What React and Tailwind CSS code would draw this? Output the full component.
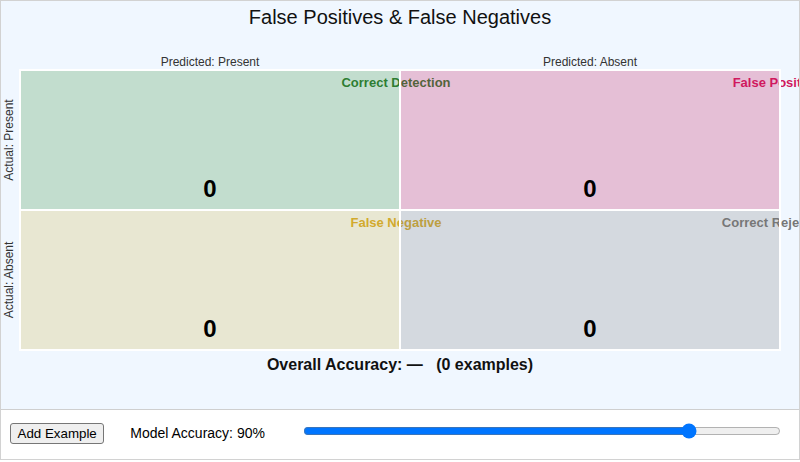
import React from "react";

const cells = [
  { label: "Correct Detection", color: "text-[#2e7d32]", bg: "bg-[#388e3c40]", value: 0 },
  { label: "False Positive", color: "text-[#d0195e]", bg: "bg-[#c2185b40]", value: 0 },
  { label: "False Negative", color: "text-[#d2aa2d]", bg: "bg-[#d0b74b40]", value: 0 },
  { label: "Correct Rejection", color: "text-[#777777]", bg: "bg-[#80808040]", value: 0 },
];

function Cell({ c }) {
  return (
    <div className={`relative flex flex-col h-[140px] w-[380px] ${c.bg} outline-2 outline-white -outline-offset-1`}>
      <div className="mt-[5px] ml-[376px] w-0 h-[15px] flex justify-center whitespace-nowrap">
        <span className={`text-[13px] leading-[15px] font-bold ${c.color}`}>{c.label}</span>
      </div>
      <div className="mt-[87px] text-center text-[24px] leading-[24px] font-bold text-black">{c.value}</div>
    </div>
  );
}

export default function App() {
  return (
    <div className="w-[800px] h-[460px] overflow-hidden border border-[#d2d2d2] flex flex-col font-['Liberation_Sans',Arial,Helvetica,sans-serif] text-black">
      <div className="h-[409px] shrink-0 bg-[#f0f7ff] border-b border-[#cfcfcf] flex flex-col">
        <div className="mt-[2px] h-[28px] text-center text-[20px] leading-[28px] text-[#111]">
          False Positives &amp; False Negatives
        </div>
        <div className="mt-[24px] ml-[19px] flex text-[12px] leading-[14px] text-[#333]">
          <div className="w-[380px] text-center">Predicted: Present</div>
          <div className="w-[380px] text-center">Predicted: Absent</div>
        </div>
        <div className="mt-[1px] flex">
          <div className="w-[19px] flex flex-col text-[12px] leading-[14px] text-[#333]">
            <div className="h-[140px] flex items-center justify-center pr-[3px]">
              <span className="shrink-0 whitespace-nowrap -rotate-90">Actual: Present</span>
            </div>
            <div className="h-[140px] flex items-center justify-center pr-[3px]">
              <span className="shrink-0 whitespace-nowrap -rotate-90">Actual: Absent</span>
            </div>
          </div>
          <div className="grid grid-cols-[380px_380px] grid-rows-[140px_140px]">
            {cells.map((c, i) => (
              <Cell key={i} c={c} />
            ))}
          </div>
        </div>
        <div className="mt-[5px] text-center text-[16px] leading-[20px] font-bold text-[#111] whitespace-pre">
          {"Overall Accuracy: —   (0 examples)"}
        </div>
      </div>
      <div className="h-[49px] shrink-0 bg-white flex items-center pl-[9px] pb-[3px]">
        <button className="bg-[#efefef] border border-[#767676] rounded-[3px] px-[6.5px] py-[2px] text-[13.33px] leading-[15px] text-black">
          Add Example
        </button>
        <span className="ml-[26px] text-[14px] leading-[16px] text-black">Model Accuracy: 90%</span>
        <input
          type="range"
          min={50}
          max={99}
          step="any"
          defaultValue={90.1}
          className="ml-[38px] mb-[4px] w-[478px] accent-[#0075ff]"
        />
      </div>
    </div>
  );
}
